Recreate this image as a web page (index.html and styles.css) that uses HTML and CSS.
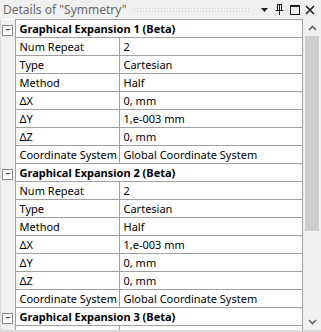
FILE: index.html
```html
<!DOCTYPE html>
<html lang="en">
<head>
    <meta charset="UTF-8">
    <title>Details of "Symmetry"</title>
    <link rel="stylesheet" href="styles.css">
</head>
<body>
    <div class="panel">
        <div class="titlebar">
            <span class="title">Details of "Symmetry"</span>
            <span class="grip"></span>
            <span class="tool">
                <svg width="9" height="6" viewBox="0 0 9 6"><path d="M1 1 L8 1 L4.5 5 Z" fill="#1e1e1e"/></svg>
            </span>
            <span class="tool">
                <svg width="9" height="11" viewBox="0 0 9 11"><path d="M2 0.5 H7 M2.5 0.5 V6.5 M6.5 0.5 V6.5 M4.5 0.5 V6.5 M0.5 6.5 H8.5 M4.5 6.5 V11" stroke="#1e1e1e" fill="none"/></svg>
            </span>
            <span class="tool">
                <svg width="10" height="10" viewBox="0 0 10 10"><rect x="0.5" y="0.5" width="9" height="9" fill="none" stroke="#1e1e1e"/><path d="M0.5 1.5 H9.5" stroke="#1e1e1e"/></svg>
            </span>
            <span class="tool">
                <svg width="10" height="10" viewBox="0 0 10 10"><path d="M1 1 L9 9 M9 1 L1 9" stroke="#1e1e1e" stroke-width="1.6"/></svg>
            </span>
        </div>
        <div class="content">
            <table class="grid">
                <colgroup>
                    <col class="col-gutter">
                    <col class="col-name">
                    <col>
                </colgroup>
                <tr class="group">
                    <td class="gutter"><span class="toggle">&minus;</span></td>
                    <td colspan="2">Graphical Expansion 1 (Beta)</td>
                </tr>
                <tr><td class="gutter"></td><td>Num Repeat</td><td>2</td></tr>
                <tr><td class="gutter"></td><td>Type</td><td>Cartesian</td></tr>
                <tr><td class="gutter"></td><td>Method</td><td>Half</td></tr>
                <tr><td class="gutter"></td><td>ΔX</td><td>0, mm</td></tr>
                <tr><td class="gutter"></td><td>ΔY</td><td>1,e-003 mm</td></tr>
                <tr><td class="gutter"></td><td>ΔZ</td><td>0, mm</td></tr>
                <tr><td class="gutter"></td><td>Coordinate System</td><td>Global Coordinate System</td></tr>
                <tr class="group">
                    <td class="gutter"><span class="toggle">&minus;</span></td>
                    <td colspan="2">Graphical Expansion 2 (Beta)</td>
                </tr>
                <tr><td class="gutter"></td><td>Num Repeat</td><td>2</td></tr>
                <tr><td class="gutter"></td><td>Type</td><td>Cartesian</td></tr>
                <tr><td class="gutter"></td><td>Method</td><td>Half</td></tr>
                <tr><td class="gutter"></td><td>ΔX</td><td>1,e-003 mm</td></tr>
                <tr><td class="gutter"></td><td>ΔY</td><td>0, mm</td></tr>
                <tr><td class="gutter"></td><td>ΔZ</td><td>0, mm</td></tr>
                <tr><td class="gutter"></td><td>Coordinate System</td><td>Global Coordinate System</td></tr>
                <tr class="group">
                    <td class="gutter"><span class="toggle">&minus;</span></td>
                    <td colspan="2">Graphical Expansion 3 (Beta)</td>
                </tr>
                <tr><td class="gutter"></td><td>Num Repeat</td><td>2</td></tr>
            </table>
            <div class="scrollbar">
                <div class="arrow">
                    <svg width="9" height="6" viewBox="0 0 9 6"><path d="M1 5 L4.5 1.5 L8 5" stroke="#606060" stroke-width="1.6" fill="none"/></svg>
                </div>
                <div class="track"><div class="thumb"></div></div>
                <div class="arrow">
                    <svg width="9" height="6" viewBox="0 0 9 6"><path d="M1 1 L4.5 4.5 L8 1" stroke="#606060" stroke-width="1.6" fill="none"/></svg>
                </div>
            </div>
        </div>
    </div>
</body>
</html>
```

FILE: styles.css
```css
body {
    margin: 0;
    background-color: #f0f0f0;
    font-family: "Noto Sans", "Open Sans", sans-serif;
    font-size: 11px;
    color: #000;
}
.panel {
    width: 321px;
    height: 332px;
    overflow: hidden;
    display: flex;
    flex-direction: column;
}
.titlebar {
    height: 19px;
    display: flex;
    align-items: center;
    padding: 0 6px 0 3px;
    gap: 4px;
}
.title {
    color: #6a6a6a;
    font-size: 12px;
    white-space: nowrap;
}
.grip {
    flex: 1;
    height: 6px;
    margin: 0 4px 0 2px;
    background-image: radial-gradient(circle, #cfcfcf 0.6px, transparent 0.7px);
    background-size: 3px 3px;
}
.tool {
    width: 11px;
    display: flex;
    justify-content: center;
    align-items: center;
}
.content {
    flex: 1;
    display: flex;
    overflow: hidden;
    border-bottom: 2px solid #dadada;
    border-left: 1px solid #dadada;
}
.grid {
    width: 302px;
    border-collapse: collapse;
    background-color: #fff;
    table-layout: fixed;
    align-self: flex-start;
}
.col-gutter {
    width: 14px;
}
.col-name {
    width: 104px;
}
.grid td {
    height: 17px;
    padding: 0 0 0 4px;
    border: 1px solid #a0a0a0;
    white-space: nowrap;
    overflow: hidden;
}
.grid td.gutter {
    padding: 0;
    background-color: #f0f0f0;
    border-top: none;
    border-bottom: none;
    border-left: none;
    text-align: center;
}
.group td {
    font-weight: bold;
}
.toggle {
    display: inline-block;
    width: 9px;
    height: 9px;
    line-height: 8px;
    border: 1px solid #8c8c8c;
    background-color: #fff;
    font-size: 9px;
    font-weight: bold;
    color: #333;
    vertical-align: middle;
}
.scrollbar {
    width: 18px;
    display: flex;
    flex-direction: column;
    background-color: #f0f0f0;
}
.arrow {
    height: 17px;
    display: flex;
    justify-content: center;
    align-items: center;
}
.track {
    flex: 1;
    padding: 0 2px;
}
.thumb {
    height: 195px;
    background-color: #cdcdcd;
}
```
